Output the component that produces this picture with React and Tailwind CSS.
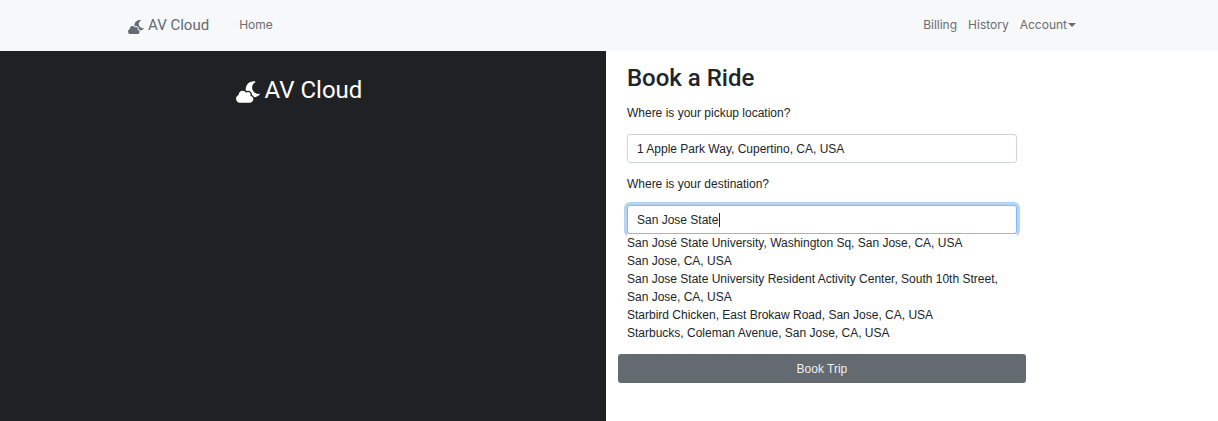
import { useState } from "react";
import { FaCloudMoon } from "react-icons/fa";

const suggestions = [
  "San José State University, Washington Sq, San Jose, CA, USA",
  "San Jose, CA, USA",
  "San Jose State University Resident Activity Center, South 10th Street, San Jose, CA, USA",
  "Starbird Chicken, East Brokaw Road, San Jose, CA, USA",
  "Starbucks, Coleman Avenue, San Jose, CA, USA",
];

function NavBar() {
  return (
    <nav className="flex items-center justify-between bg-[#f7f8fa] px-32 pt-[13px] pb-[14px] font-['Inter',sans-serif] text-[12px] leading-6 text-[#6b6d70]">
      <div className="flex items-center">
        <a href="#" className="mr-[30px] flex items-center gap-1 font-['Roboto',sans-serif] text-[15px] leading-6 text-[#646b72]">
          <FaCloudMoon className="mt-1 size-4" />
          AV Cloud
        </a>
        <a href="#home">Home</a>
      </div>
      <div className="mr-[14px] flex items-center gap-[11px]">
        <a href="#billing">Billing</a>
        <a href="#history">History</a>
        <button type="button" className="flex items-center gap-px">
          Account
          <svg viewBox="0 0 8 4" className="w-2" fill="currentColor" aria-hidden="true">
            <path d="M0 0h8L4 4z" />
          </svg>
        </button>
      </div>
    </nav>
  );
}

function BookingForm() {
  const [pickup, setPickup] = useState("1 Apple Park Way, Cupertino, CA, USA");
  const [destination, setDestination] = useState("San Jose State");
  return (
    <form className="w-full max-w-[408px] text-[12px] leading-[18px] text-[#212529]">
      <div className="px-[9px]">
        <h1 className="mb-3 font-['Roboto',sans-serif] text-[24px] leading-7 font-medium">Book a Ride</h1>
        <label htmlFor="pickup" className="mb-3 block">
          Where is your pickup location?
        </label>
        <input
          id="pickup"
          value={pickup}
          onChange={(e) => setPickup(e.target.value)}
          className="mb-3 block h-[29px] w-full rounded-[3px] border border-[#ced4da] bg-white px-[9px] outline-none focus:border-[#80bdff] focus:ring-3 focus:ring-[#b9d4f3]"
        />
        <label htmlFor="destination" className="mb-3 block">
          Where is your destination?
        </label>
        <div className="relative">
          <input
            id="destination"
            autoFocus
            value={destination}
            onChange={(e) => setDestination(e.target.value)}
            className="block h-[29px] w-full rounded-[3px] border border-[#ced4da] bg-white px-[9px] caret-transparent outline-none focus:border-[#80bdff] focus:ring-3 focus:ring-[#b9d4f3]"
          />
          <span aria-hidden="true" className="absolute top-2 left-[92px] h-[14px] w-px bg-[#212529]" />
        </div>
        <ul className="relative mb-3 bg-white">
          {suggestions.map((s) => (
            <li key={s}>{s}</li>
          ))}
        </ul>
      </div>
      <button type="button" className="h-[29px] w-full rounded-[3px] bg-[#636a70] text-[#eef0f2]">
        Book Trip
      </button>
    </form>
  );
}

export default function App() {
  return (
    <div className="flex min-h-screen flex-col bg-white font-['Liberation_Sans',Arial,sans-serif]">
      <NavBar />
      <main className="flex grow">
        <section className="flex w-[49.75%] justify-center bg-[#202124] pt-[23px] text-white">
          <h2 className="mr-2 flex h-8 items-center gap-[5px] font-['Roboto',sans-serif] text-[24px] leading-8">
            <FaCloudMoon className="mt-1 size-6" />
            AV Cloud
          </h2>
        </section>
        <section className="grow px-3 pt-[13px] pb-9">
          <BookingForm />
        </section>
      </main>
    </div>
  );
}
